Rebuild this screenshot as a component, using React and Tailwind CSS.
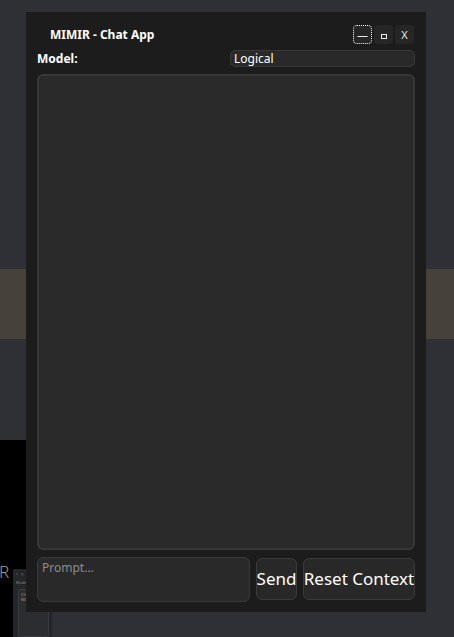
import React from "react";

const font = { fontFamily: '"Noto Sans", "Open Sans", sans-serif' };

function WinButton({ children, focused }) {
  return (
    <button
      className={
        "w-[19px] h-[19px] rounded-[4px] bg-[#262626] text-[#e8e8e8] text-[11px] leading-none flex items-center justify-center " +
        (focused ? "outline outline-1 outline-dotted outline-white -outline-offset-1" : "")
      }
    >
      {children}
    </button>
  );
}

export default function App() {
  return (
    <div className="relative w-[454px] h-[637px] overflow-hidden bg-[#2f3036]" style={font}>
      {/* desktop behind the window */}
      <div className="absolute left-0 top-[269px] w-full h-[70px] bg-[#46413a]" />
      <div className="absolute left-0 top-[440px] w-[26px] h-[197px] bg-black" />
      <div className="absolute -left-[1px] top-[563px] text-[17px] font-light leading-none text-[#9a9a9a]">R</div>
      <div className="absolute left-[13px] top-[569px] w-[39px] h-[68px] bg-[#25262a] flex flex-col gap-[4px] px-[3px] pt-[3px]">
        <div className="flex gap-[3px] text-[5px] leading-none text-[#888]">
          <span>▫</span>
          <span>▿</span>
        </div>
        <div className="text-[4px] leading-none text-[#888]">Mode</div>
        <div className="flex-1 ml-[2px] rounded-[2px] bg-[#2c2d31] border border-[#3a3b40] text-[4px] leading-[5px] text-[#999] p-[2px]">
          Chat
          <br />
          MIMI
        </div>
      </div>

      {/* chat window */}
      <div className="absolute left-[26px] top-[12px] w-[400px] h-[600px] bg-[#1c1c1c] flex flex-col px-[11px] pt-[13px] pb-[10px]">
        <div className="flex items-center justify-between h-[19px]">
          <span className="ml-[13px] text-[12px] font-bold text-white">MIMIR - Chat App</span>
          <div className="flex gap-[2px] mr-[1px]">
            <WinButton focused>—</WinButton>
            <WinButton>
              <span className="block w-[6px] h-[5px] border border-[#e8e8e8] mt-[3px]" />
            </WinButton>
            <WinButton>X</WinButton>
          </div>
        </div>

        <div className="flex items-center justify-between mt-[6px] h-[17px]">
          <span className="text-[12px] font-bold text-white mt-[1px]">Model:</span>
          <div className="w-[185px] h-[17px] rounded-[5px] bg-[#292929] border border-[#383838] flex items-center px-[3px] text-[12px] text-white">
            Logical
          </div>
        </div>

        <div className="mt-[7px] flex-1 rounded-[6px] bg-[#2a2a2a] border-2 border-[#383838]" />

        <div className="mt-[7px] flex gap-[6px] h-[45px]">
          <div className="w-[213px] h-[45px] rounded-[6px] bg-[#292929] border border-[#3a3a3a] px-[4px] pt-[4px] text-[12px] leading-none text-[#8c8c8c]">
            Prompt...
          </div>
          <button className="w-[41px] h-[42px] mt-[1px] rounded-[6px] bg-[#282828] border border-[#3a3a3a] text-[17px] text-white flex items-center justify-center">
            Send
          </button>
          <button className="w-[112px] h-[42px] mt-[1px] rounded-[6px] bg-[#282828] border border-[#3a3a3a] text-[17px] text-white flex items-center justify-center whitespace-nowrap">
            Reset Context
          </button>
        </div>
      </div>
    </div>
  );
}
